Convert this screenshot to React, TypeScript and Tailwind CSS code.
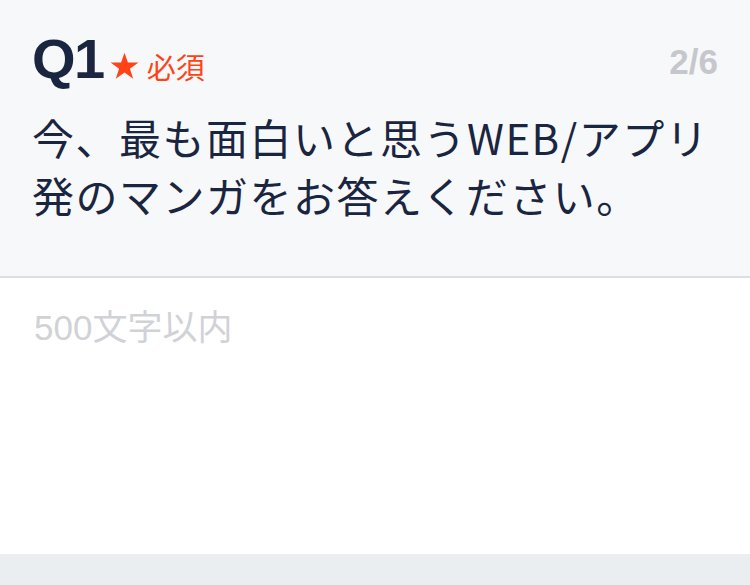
export default function App() {
  return (
    <div className="w-[750px] h-[585px] flex flex-col bg-white">
      {/* Question header */}
      <div className="h-[278px] bg-[#f7f8fa] border-b-2 border-[#dddee2] px-8 pt-[27px]">
        <div className="flex items-start justify-between">
          <div className="flex items-end">
            <span className="font-['Liberation_Sans',sans-serif] font-bold text-[56px] leading-[64px] text-[#1a2540] tracking-[-1.5px]">
              Q1
            </span>
            <span className="flex items-center ml-[6px] mb-[8px]">
              <svg width="29" height="28" viewBox="0 0 24 23" className="mr-[8px]">
                <path d="M12 0.5l2.8 8.2h8.7l-7 5.1 2.7 8.2L12 16.9 4.8 22l2.7-8.2-7-5.1h8.7z" fill="#ff4316" />
              </svg>
              <span className="font-['Noto_Sans_CJK_JP',sans-serif] text-[29px] leading-[34px] text-[#ff4316]">
                必須
              </span>
            </span>
          </div>
          <span className="font-['Liberation_Sans',sans-serif] font-bold text-[35px] leading-[40px] text-[#c6c7cc] mt-[15px]">
            2/6
          </span>
        </div>
        <p className="mt-[17px] font-['Noto_Sans_CJK_JP',sans-serif] text-[42px] leading-[58px] tracking-[1.5px] text-[#1a2540] whitespace-nowrap">
          今、最も面白いと思うWEB/アプリ
          <br />
          発のマンガをお答えください。
        </p>
      </div>

      {/* Answer input */}
      <div className="flex-1 px-[34px] pt-[30px]">
        <div className="font-['Liberation_Sans','Noto_Sans_CJK_JP',sans-serif] text-[35px] leading-[40px] text-[#d1d2d6]">
          500文字以内
        </div>
      </div>

      <div className="h-[31px] bg-[#ebeef1]" />
    </div>
  );
}
